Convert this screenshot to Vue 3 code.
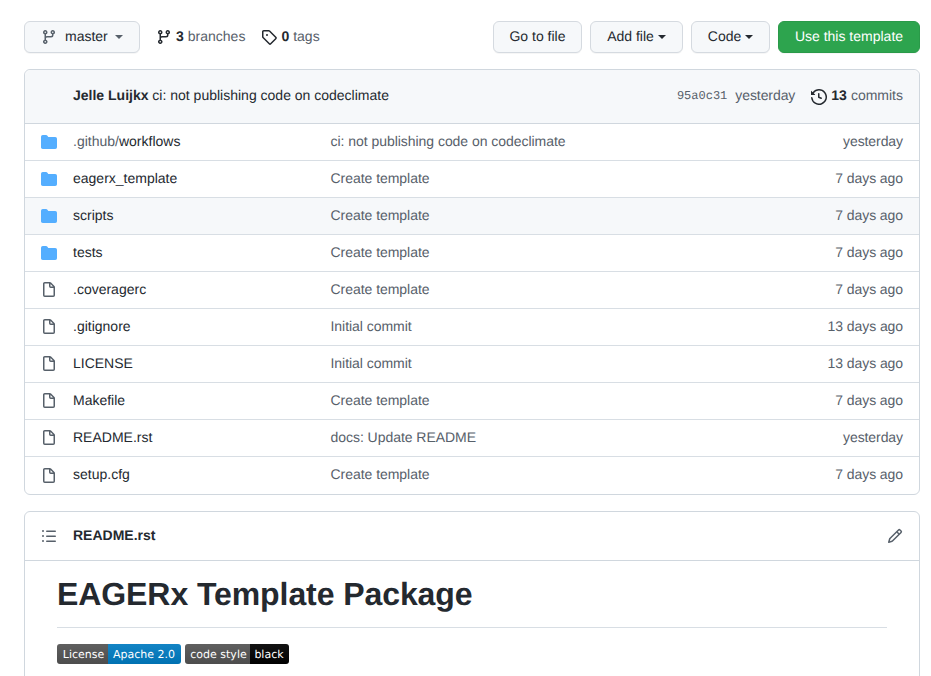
<template>
  <div class="page">
    <div class="toolbar">
      <button class="btn branch-btn">
        <svg class="icon muted-icon" viewBox="0 0 16 16"><path fill-rule="evenodd" :d="icons.branch" /></svg>
        <span class="branch-name lift">master</span>
        <span class="caret"></span>
      </button>
      <a class="stat">
        <svg class="icon dark-icon" viewBox="0 0 16 16"><path fill-rule="evenodd" :d="icons.branch" /></svg>
        <strong class="lift">3</strong><span class="lift">branches</span>
      </a>
      <a class="stat">
        <svg class="icon dark-icon" viewBox="0 0 16 16"><path fill-rule="evenodd" :d="icons.tag" /></svg>
        <strong class="lift">0</strong><span class="lift">tags</span>
      </a>
      <div class="actions">
        <button class="btn go-btn"><span class="lift">Go to file</span></button>
        <button class="btn add-btn"><span class="lift">Add file</span><span class="caret small"></span></button>
        <button class="btn code-btn"><span class="lift">Code</span><span class="caret small"></span></button>
        <button class="btn green"><span class="lift">Use this template</span></button>
      </div>
    </div>

    <div class="box files">
      <div class="commit-head">
        <div class="commit-msg lift"><strong>Jelle Luijkx</strong> ci: not publishing code on codeclimate</div>
        <div class="commit-meta">
          <span class="sha">95a0c31</span>
          <span class="when lift">yesterday</span>
          <a class="history">
            <svg class="icon dark-icon" viewBox="0 0 16 16"><path fill-rule="evenodd" :d="icons.history" /></svg>
            <strong class="lift">13</strong><span class="lift">commits</span>
          </a>
        </div>
      </div>
      <div
        v-for="file in files"
        :key="file.name"
        class="row"
        :class="{ hover: file.name === 'scripts' }"
      >
        <svg v-if="file.dir" class="icon folder" viewBox="0 0 16 16"><path :d="icons.folder" /></svg>
        <svg v-else class="icon muted-icon" viewBox="0 0 16 16"><path fill-rule="evenodd" :d="icons.file" /></svg>
        <div class="name lift"><span v-if="file.prefix" class="prefix">{{ file.prefix }}</span>{{ file.name }}</div>
        <div class="msg lift">{{ file.msg }}</div>
        <div class="age lift">{{ file.age }}</div>
      </div>
    </div>

    <div class="box readme">
      <div class="readme-head">
        <svg class="icon list-icon" viewBox="0 0 16 16"><path fill-rule="evenodd" :d="icons.list" /></svg>
        <strong class="readme-title lift">README.rst</strong>
        <svg class="icon muted-icon pencil" viewBox="0 0 16 16"><path fill-rule="evenodd" :d="icons.pencil" /></svg>
      </div>
      <div class="readme-body">
        <h1>EAGERx Template Package</h1>
        <div class="badges">
          <span class="badge"><span class="left lic">License</span><span class="right blue">Apache 2.0</span></span>
          <span class="badge"><span class="left style">code style</span><span class="right black">black</span></span>
        </div>
      </div>
    </div>
  </div>
</template>

<script setup>
const icons = {
  branch:
    "M11.75 2.5a.75.75 0 100 1.5.75.75 0 000-1.5zm-2.25.75a2.25 2.25 0 113 2.122V6A2.5 2.5 0 0110 8.5H6a1 1 0 00-1 1v1.128a2.251 2.251 0 11-1.5 0V5.372a2.25 2.25 0 111.5 0v1.836A2.492 2.492 0 016 7h4a1 1 0 001-1v-.628A2.25 2.25 0 019.5 3.25zM4.25 12a.75.75 0 100 1.5.75.75 0 000-1.5zM3.5 3.25a.75.75 0 111.5 0 .75.75 0 01-1.5 0z",
  tag:
    "M2.5 7.775V2.75a.25.25 0 01.25-.25h5.025a.25.25 0 01.177.073l6.25 6.25a.25.25 0 010 .354l-5.025 5.025a.25.25 0 01-.354 0l-6.25-6.25a.25.25 0 01-.073-.177zm-1.5 0V2.75C1 1.784 1.784 1 2.75 1h5.025c.464 0 .91.184 1.238.513l6.25 6.25a1.75 1.75 0 010 2.474l-5.026 5.026a1.75 1.75 0 01-2.474 0l-6.25-6.25A1.75 1.75 0 011 7.775zM6 5a1 1 0 100 2 1 1 0 000-2z",
  history:
    "M1.643 3.143L.427 1.927A.25.25 0 000 2.104V5.75c0 .138.112.25.25.25h3.646a.25.25 0 00.177-.427L2.715 4.215a6.5 6.5 0 11-1.18 4.458.75.75 0 10-1.493.154 8.001 8.001 0 101.6-5.684zM7.75 4a.75.75 0 01.75.75v2.992l2.028.812a.75.75 0 01-.557 1.392l-2.5-1A.75.75 0 017 8.25v-3.5A.75.75 0 017.75 4z",
  folder:
    "M1.75 1A1.75 1.75 0 000 2.75v10.5C0 14.216.784 15 1.75 15h12.5A1.75 1.75 0 0016 13.25v-8.5A1.75 1.75 0 0014.25 3H7.5a.25.25 0 01-.2-.1l-.9-1.2C6.07 1.26 5.55 1 5 1H1.75z",
  file:
    "M3.75 1.5a.25.25 0 00-.25.25v11.5c0 .138.112.25.25.25h8.5a.25.25 0 00.25-.25V6H9.75A1.75 1.75 0 018 4.25V1.5H3.75zm5.75.56v2.19c0 .138.112.25.25.25h2.19L9.5 2.06zM2 1.75C2 .784 2.784 0 3.75 0h5.086c.464 0 .909.184 1.237.513l3.414 3.414c.329.328.513.773.513 1.237v8.086A1.75 1.75 0 0112.25 15h-8.5A1.75 1.75 0 012 13.25V1.75z",
  list:
    "M2 4a1 1 0 100-2 1 1 0 000 2zm3.75-1.5a.75.75 0 000 1.5h8.5a.75.75 0 000-1.5h-8.5zm0 5a.75.75 0 000 1.5h8.5a.75.75 0 000-1.5h-8.5zm0 5a.75.75 0 000 1.5h8.5a.75.75 0 000-1.5h-8.5zM3 8a1 1 0 11-2 0 1 1 0 012 0zm-1 6a1 1 0 100-2 1 1 0 000 2z",
  pencil:
    "M11.013 1.427a1.75 1.75 0 012.474 0l1.086 1.086a1.75 1.75 0 010 2.474l-8.61 8.61c-.21.21-.47.364-.756.445l-3.251.93a.75.75 0 01-.927-.928l.929-3.25a1.75 1.75 0 01.445-.758l8.61-8.61zm1.414 1.06a.25.25 0 00-.354 0L10.811 3.75l1.439 1.44 1.263-1.263a.25.25 0 000-.354l-1.086-1.086zM11.189 6.25L9.75 4.81l-6.286 6.287a.25.25 0 00-.064.108l-.558 1.953 1.953-.558a.249.249 0 00.108-.064l6.286-6.286z",
};

const files = [
  { dir: true, prefix: ".github/", name: "workflows", msg: "ci: not publishing code on codeclimate", age: "yesterday" },
  { dir: true, name: "eagerx_template", msg: "Create template", age: "7 days ago" },
  { dir: true, name: "scripts", msg: "Create template", age: "7 days ago" },
  { dir: true, name: "tests", msg: "Create template", age: "7 days ago" },
  { name: ".coveragerc", msg: "Create template", age: "7 days ago" },
  { name: ".gitignore", msg: "Initial commit", age: "13 days ago" },
  { name: "LICENSE", msg: "Initial commit", age: "13 days ago" },
  { name: "Makefile", msg: "Create template", age: "7 days ago" },
  { name: "README.rst", msg: "docs: Update README", age: "yesterday" },
  { name: "setup.cfg", msg: "Create template", age: "7 days ago" },
];
</script>

<style>
html,
body {
  margin: 0;
  background: #fff;
}
</style>

<style scoped>
.page {
  box-sizing: border-box;
  width: 931px;
  height: 676px;
  overflow: hidden;
  padding: 21px 11px 0 24px;
  font-family: "Liberation Sans", Arial, sans-serif;
  font-size: 14px;
  line-height: 21px;
  color: #24292f;
  text-rendering: geometricPrecision;
}

/* text sits 1px above the icons' centre line */
.lift {
  margin-bottom: 2px;
}

.toolbar {
  display: flex;
  align-items: center;
  height: 32px;
  margin-bottom: 16px;
}

.icon {
  width: 16px;
  height: 16px;
  flex: none;
  display: block;
}

.muted-icon {
  fill: #57606a;
}

.dark-icon {
  fill: #24292f;
}

.folder {
  fill: #54aeff;
}

.list-icon {
  fill: #57606a;
}

.btn {
  box-sizing: border-box;
  height: 32px;
  padding: 0;
  display: inline-flex;
  align-items: center;
  justify-content: center;
  background: #f6f8fa;
  border: 1px solid #d5dae0;
  border-radius: 6px;
  font: inherit;
  text-rendering: inherit;
  white-space: nowrap;
  color: #24292f;
  box-shadow: 0 1px 0 rgba(27, 31, 36, 0.04);
}

.branch-btn {
  width: 116px;
  padding: 0 16px;
  justify-content: flex-start;
  margin-right: 16px;
}

.branch-name {
  margin-left: 8px;
}

.caret {
  display: inline-block;
  width: 0;
  height: 0;
  margin-left: 7.5px;
  margin-bottom: 1px;
  border-style: solid;
  border-width: 4px 4px 0;
  border-color: #57606a transparent transparent;
}

.caret.small {
  margin-left: 4px;
  border-color: #24292f transparent transparent;
}

.stat {
  display: flex;
  align-items: center;
  color: #57606a;
  margin-right: 16px;
}

.stat .icon {
  margin-right: 4px;
}

.stat strong {
  color: #24292f;
  margin-right: 4px;
}

.actions {
  margin-left: auto;
  display: flex;
  gap: 8px;
}

.go-btn {
  width: 89px;
}

.add-btn {
  width: 93px;
}

.code-btn {
  width: 79px;
}

.green {
  width: 142px;
  background: #2da44e;
  border-color: #2a9a49;
  color: #fff;
}

.box {
  border: 1px solid #d0d7de;
  border-radius: 6px;
}

.files {
  margin-bottom: 16px;
}

.commit-head {
  box-sizing: border-box;
  height: 54px;
  display: flex;
  align-items: center;
  justify-content: space-between;
  padding: 0 16px 0 48px;
  background: #f6f8fa;
  border-bottom: 1px solid #d0d7de;
  border-radius: 6px 6px 0 0;
}

.commit-meta {
  display: flex;
  align-items: center;
  color: #57606a;
}

.sha {
  font-family: "Liberation Mono", monospace;
  font-size: 12px;
  margin-right: 8px;
}

.when {
  letter-spacing: -0.08px;
}

.history {
  display: flex;
  align-items: center;
  margin-left: 16px;
}

.history .icon {
  margin-right: 4px;
}

.history strong {
  color: #24292f;
  margin-right: 4px;
}

.row {
  box-sizing: border-box;
  height: 37px;
  display: flex;
  align-items: center;
  padding: 0 16px;
  border-bottom: 1px solid #d8dee4;
}

.row:last-child {
  border-bottom: 0;
}

.row.hover {
  background: #f6f8fa;
}

.name {
  width: 257.5px;
  margin-left: 16px;
  flex: none;
}

.prefix {
  color: #57606a;
}

.msg {
  flex: 1;
  color: #57606a;
  letter-spacing: -0.04px;
}

.age {
  color: #57606a;
  text-align: right;
  letter-spacing: -0.08px;
}

.readme {
  height: 300px;
}

.readme-head {
  box-sizing: border-box;
  height: 49px;
  display: flex;
  align-items: center;
  padding: 0 16px;
  border-bottom: 1px solid #d0d7de;
}

.readme-title {
  margin-left: 16px;
}

.pencil {
  margin-left: auto;
}

.readme-body {
  padding: 0 32px;
}

h1 {
  box-sizing: border-box;
  margin: 0 0 16px;
  height: 67px;
  padding-top: 13px;
  font-size: 32px;
  line-height: 40px;
  font-weight: 600;
  letter-spacing: -0.08px;
  color: #24292f;
  border-bottom: 1px solid #d8dee4;
}

.badges {
  display: flex;
  gap: 4px;
}

.badge {
  display: flex;
  height: 20px;
  border-radius: 3px;
  overflow: hidden;
  font-family: "DejaVu Sans", Verdana, sans-serif;
  font-size: 11px;
  line-height: 21px;
  color: #fff;
}

.left,
.right {
  display: block;
  box-sizing: border-box;
  text-align: center;
  background-image: linear-gradient(rgba(187, 187, 187, 0.1), rgba(0, 0, 0, 0.1));
}

.left {
  background-color: #555;
  padding-left: 2px;
}

.right {
  padding-right: 1px;
}

.lic {
  width: 51px;
}

.style {
  width: 65px;
}

.blue {
  width: 73px;
  background-color: #007ec6;
}

.black {
  width: 39px;
  background-color: #000;
}
</style>
